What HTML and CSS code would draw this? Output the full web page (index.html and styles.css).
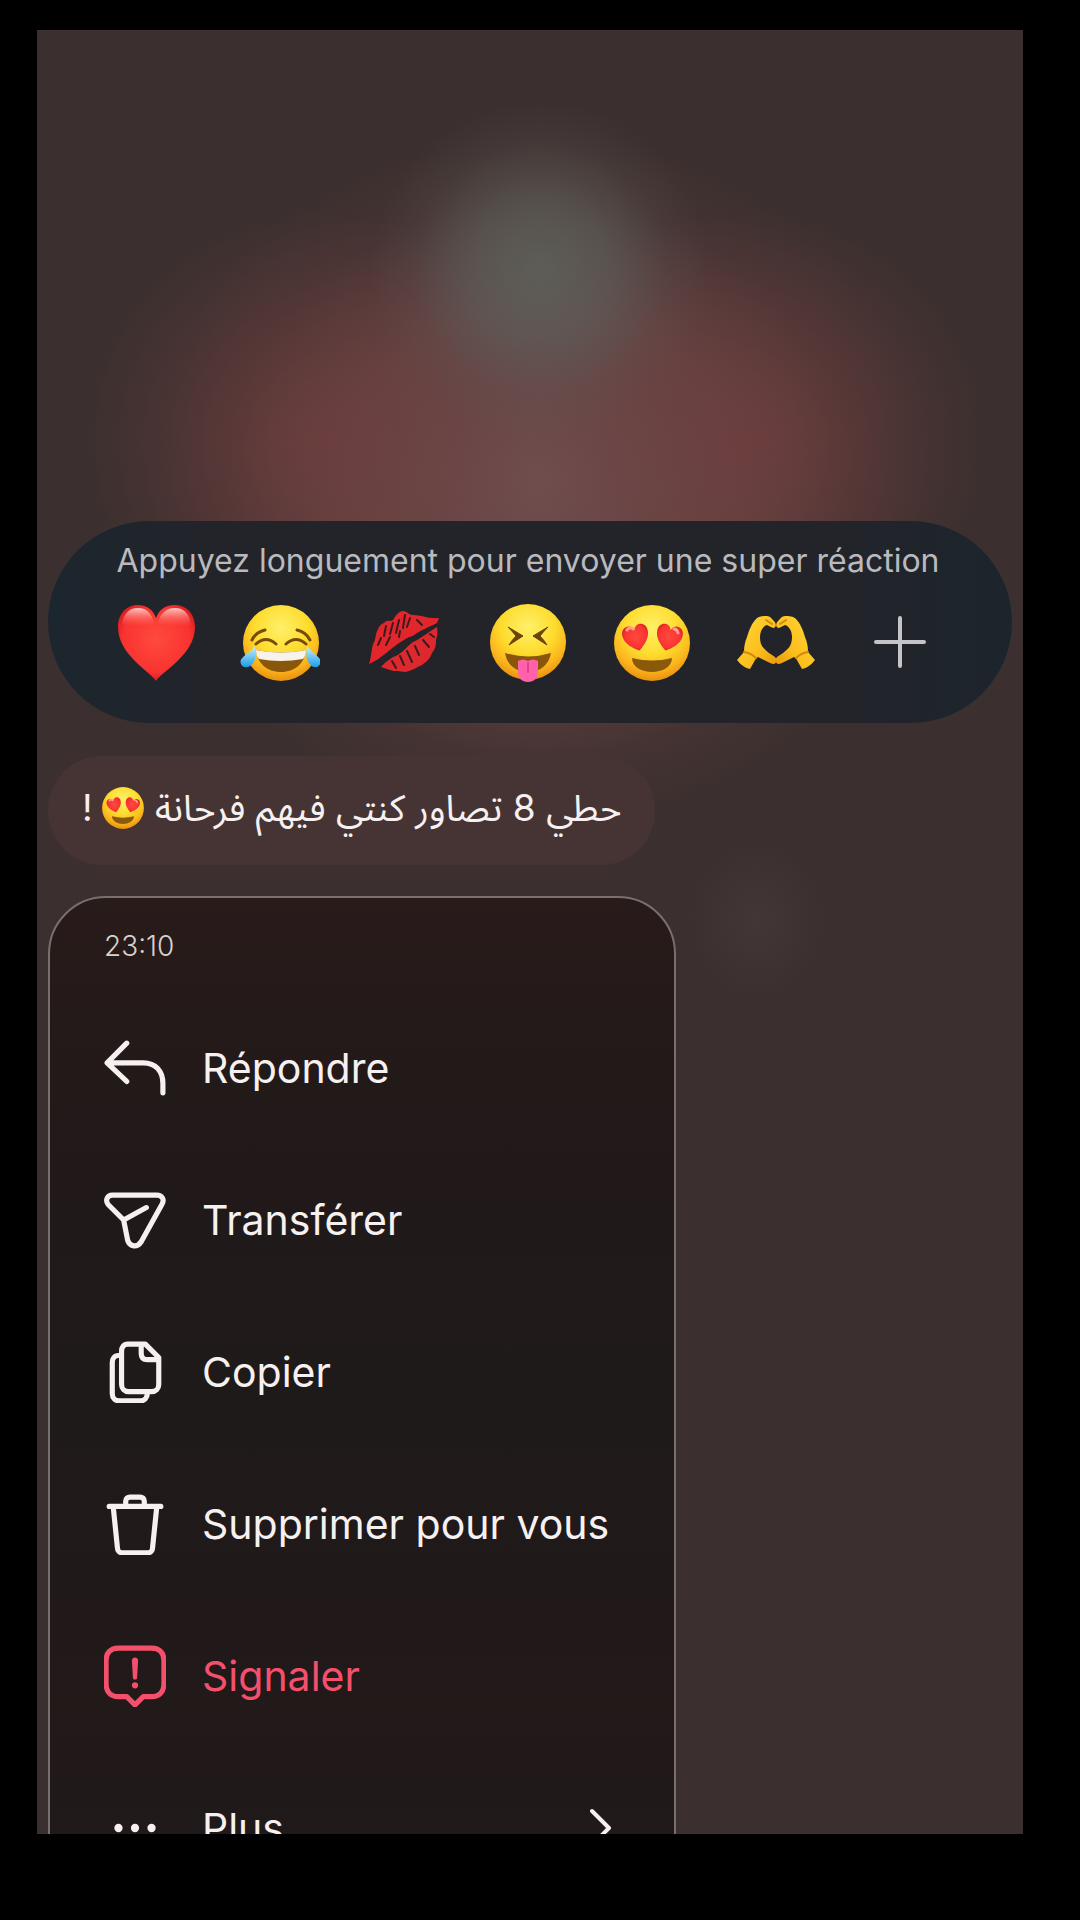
FILE: index.html
```html
<!DOCTYPE html>
<html lang="fr">
<head>
    <meta charset="utf-8">
    <meta name="viewport" content="width=device-width, initial-scale=1">
    <title>Message</title>
    <link rel="stylesheet" href="styles.css">
</head>
<body>
    <!-- Shared emoji shapes -->
    <svg class="defs" width="0" height="0" aria-hidden="true">
        <defs>
            <radialGradient id="face" cx="50%" cy="30%" r="70%">
                <stop offset="0" stop-color="#fff06a"/>
                <stop offset="0.5" stop-color="#fddc2e"/>
                <stop offset="0.8" stop-color="#fbb41c"/>
                <stop offset="1" stop-color="#e8900f"/>
            </radialGradient>
            <radialGradient id="red" cx="50%" cy="45%" r="62%">
                <stop offset="0" stop-color="#ff4a3e"/>
                <stop offset="0.7" stop-color="#f93330"/>
                <stop offset="1" stop-color="#c8141c"/>
            </radialGradient>
            <linearGradient id="shine" x1="0" y1="0" x2="0" y2="1">
                <stop offset="0" stop-color="#ffd9d6" stop-opacity="0.9"/>
                <stop offset="1" stop-color="#ff6a60" stop-opacity="0"/>
            </linearGradient>
            <linearGradient id="tear" x1="0" y1="0" x2="0" y2="1">
                <stop offset="0" stop-color="#c8f2fb"/>
                <stop offset="1" stop-color="#1c9be8"/>
            </linearGradient>
            <linearGradient id="hand" x1="0" y1="0" x2="1" y2="1">
                <stop offset="0" stop-color="#ffd83a"/>
                <stop offset="0.6" stop-color="#fcbf1d"/>
                <stop offset="1" stop-color="#e5950f"/>
            </linearGradient>
            <path id="eye-heart" d="M0 14C-6 10-13 4-13-4c0-5 3-8 7-8 3 0 5 2 6 5 1-3 3-5 6-5 4 0 7 3 7 8 0 8-7 14-13 18z"/>
            <path id="half-hands" d="M1 57L8 49C8 43 9 39 11 34C13 27 16 20 20 16C23 13 27 13 31 13C34 13 36 16 38 18C41 21 40 25 37 25L31 22C27 23 24 28 24 34C24 43 28 46 33 50L39 54C41 56 41 60 38 61C35 61 33 59 30 58L22 54C20 55 19 57 18 59L14 66C9 65 5 62 1 57z"/>
            <symbol id="heart-eyes" viewBox="0 0 80 80">
                <circle cx="40" cy="40" r="38" fill="url(#face)"/>
                <use href="#eye-heart" transform="translate(24 34) rotate(-14)" fill="url(#red)"/>
                <use href="#eye-heart" transform="translate(57 34) rotate(14)" fill="url(#red)"/>
                <path d="M15 27q3-4 6-1M62 26q3 0 4 4" fill="none" stroke="#ff9d94" stroke-width="3" stroke-linecap="round"/>
                <path d="M20 55q20 5 40 0c0 9-10 14-20 14s-20-5-20-14z" fill="#8a5a0a"/>
            </symbol>
        </defs>
    </svg>

    <main class="screen">
        <section class="reactions" aria-label="Réactions">
            <p class="hint">Appuyez longuement pour envoyer une super réaction</p>
            <div class="emoji-row">
                <button type="button" aria-label="Cœur">
                    <svg viewBox="0 0 80 80">
                        <path d="M40 78C34 68 2 52 2 24 2 10 11 2 22 2c9 0 15 5 18 13C43 7 49 2 58 2c12 0 21 8 21 22 0 28-33 44-39 54z" fill="url(#red)"/>
                        <path d="M6 22C7 11 13 5 22 5s14 6 16 15c-9 4-22 3-32 2zM42 20C44 11 50 5 59 5s15 6 16 17c-11 2-24 2-33-2z" fill="url(#shine)"/>
                    </svg>
                </button>
                <button type="button" aria-label="Larmes de joie">
                    <svg viewBox="0 0 80 80">
                        <circle cx="41" cy="40" r="38" fill="url(#face)"/>
                        <path d="M12 37q4-8 13-10M70 37q-4-8-13-10" fill="none" stroke="#7a4a08" stroke-width="3" stroke-linecap="round"/>
                        <path d="M16 41q10-9 20 0M46 41q10-9 20 0" fill="none" stroke="#7a4a08" stroke-width="3" stroke-linecap="round"/>
                        <path d="M16 47q25 5 50 0c-1 13-11 22-25 22S17 60 16 47z" fill="#8a560a"/>
                        <path d="M16 47q25 5 50 0c0 4-1 7-3 9q-22 4-44 0c-2-2-3-5-3-9z" fill="#f7f3ec"/>
                        <path d="M15 43c1 8 1 13-2 17-3 5-10 6-12 1-3-7 8-9 14-18zM67 43c-1 8-1 13 2 17 3 5 9 6 11 1 3-7-7-9-13-18z" fill="url(#tear)"/>
                    </svg>
                </button>
                <button type="button" aria-label="Bisou">
                    <svg viewBox="0 0 80 80">
                        <path d="M5 61c3-8 2-18 6-24 1-8 4-16 9-17 3-4 6-1 9-3 3-5 6-9 10-9 4 0 6 4 10 4 8 0 16 4 26 3l-2 5c-8 4-13 6-20 10-7 5-12 7-17 12-10 2-18 14-31 19z" fill="#e2262b"/>
                        <path d="M17 64c4-5 8-7 12-10 8-2 13-10 20-15 9-4 15-10 24-15 1 6 0 9-1 13 0 7-1 9-4 13-2 6-6 9-10 12-5 2-10 6-17 7-5-1-10 0-15-2z" fill="#dd282d"/>
                        <path d="M22 23l-2 10M29 20l-3 11M35 17l-3 13M41 12l-2 13M46 15l-3 9M53 17l5 5M17 35l-3 7M26 34l-4 8M36 28l-1 6M28 58l4 7M36 53l4 9M43 48l5 11M51 43l4 9M59 37l6 7M66 31l4 3" fill="none" stroke="#3b1a20" stroke-width="2" stroke-linecap="round"/>
                        <path d="M27 46l8-6 10-6 6-1-8 8-11 4z" fill="#22242a"/>
                    </svg>
                </button>
                <button type="button" aria-label="Langue tirée">
                    <svg viewBox="0 0 80 80">
                        <circle cx="40" cy="39" r="38" fill="url(#face)"/>
                        <path d="M20 24l15 9-14 9q3-5 7-9-4-5-8-9zM60 24l-15 9 14 9q-3-5-7-9 4-5 8-9z" fill="#6c430a" stroke="#6c430a" stroke-linejoin="round"/>
                        <path d="M17 50q23 7 46 0c-2 12-11 19-23 19s-21-7-23-19z" fill="#8a560a"/>
                        <path d="M30 58q5-3 10 0 5-3 10 0v11c0 6-4 10-10 10s-10-4-10-10z" fill="#ff62ab"/>
                        <path d="M40 60v9" stroke="#e63f8d" stroke-width="2" stroke-linecap="round"/>
                    </svg>
                </button>
                <button type="button" aria-label="Yeux en cœur">
                    <svg><use href="#heart-eyes"/></svg>
                </button>
                <button type="button" aria-label="Mains en cœur">
                    <svg viewBox="0 0 80 80">
                        <use href="#half-hands" fill="url(#hand)"/>
                        <use href="#half-hands" transform="matrix(-1 0 0 1 80 0)" fill="url(#hand)"/>
                        <path d="M30 17l6 4M50 17l-6 4M8 49q7 1 12 6M72 49q-7 1-12 6" fill="none" stroke="#d08a10" stroke-width="2" stroke-linecap="round"/>
                    </svg>
                </button>
                <button type="button" aria-label="Ajouter">
                    <svg viewBox="0 0 80 80">
                        <path d="M16 39h48M40 15v48" fill="none" stroke="#c4c4c9" stroke-width="4" stroke-linecap="round"/>
                    </svg>
                </button>
            </div>
        </section>

        <p class="bubble" dir="rtl" lang="ar">حطي 8 تصاور كنتي فيهم فرحانة <svg role="img" aria-label="Yeux en cœur"><use href="#heart-eyes"/></svg>!</p>

        <section class="menu">
            <time class="time">23:10</time>
            <button type="button" class="item">
                <svg viewBox="0 0 60 60"><path d="M22 6L3 25l19 18M4 25h34c12 0 19 8 19 20v9"/></svg>
                <span>Répondre</span>
            </button>
            <button type="button" class="item">
                <svg viewBox="0 0 60 60"><path d="M8 6h43c5 0 8 4 5 9L36 51c-4 6-11 5-13-1l-4-20L4 15C1 11 3 6 8 6zM19 30l22-12"/></svg>
                <span>Transférer</span>
            </button>
            <button type="button" class="item">
                <svg viewBox="0 0 60 60"><path d="M23 3h17l13 13v26c0 4-3 7-7 7H24c-4 0-7-3-7-7V10c0-4 2-7 6-7zM36 3v9c0 4 2 6 6 6h11M17 14h-3c-4 0-6 3-6 7v30c0 4 3 7 7 7h20c4 0 7-3 7-8"/></svg>
                <span>Copier</span>
            </button>
            <button type="button" class="item">
                <svg viewBox="0 0 60 60"><path d="M5 13h50M9 14l4 39c0 3 2 5 5 5h24c3 0 5-2 5-5l4-39M21 12V8c0-3 2-4 4-4h10c2 0 4 1 4 4v4"/></svg>
                <span>Supprimer pour vous</span>
            </button>
            <button type="button" class="item danger">
                <svg viewBox="0 0 60 60"><path d="M14 3h32c8 0 12 5 12 12v22c0 8-4 13-12 13h-8l-8 8-8-8h-8C6 50 2 45 2 37V15C2 8 6 3 14 3z"/><path class="solid" d="M27 15c0-4 6-4 6 0l-1 17c0 2-4 2-4 0z"/><circle class="solid" cx="30" cy="39" r="3"/></svg>
                <span>Signaler</span>
            </button>
            <button type="button" class="item">
                <svg viewBox="0 0 60 60"><g class="solid"><circle cx="14" cy="30" r="4"/><circle cx="30" cy="30" r="4"/><circle cx="46" cy="30" r="4"/></g></svg>
                <span>Plus</span>
                <svg class="chevron" viewBox="0 0 22 40"><path d="M2 3l17 17L2 37"/></svg>
            </button>
        </section>
    </main>
</body>
</html>
```

FILE: styles.css
```css
* {
    box-sizing: border-box;
}

body {
    margin: 0;
    padding: 30px 57px 86px 37px;
    height: 100vh;
    background-color: #000;
    font-family: Inter, Roboto, sans-serif;
    color: #f6f1f0;
}

button {
    border: 0;
    padding: 0;
    background: none;
    color: inherit;
    font: inherit;
    cursor: pointer;
}

.defs {
    position: absolute;
}

.screen {
    height: 100%;
    overflow: hidden;
    padding: 491px 11px 0;
    display: flex;
    flex-direction: column;
    align-items: flex-start;
    background:
        radial-gradient(170px 170px at 51% 240px, rgba(94, 97, 91, 0.9) 0%, rgba(94, 95, 90, 0.65) 40%, rgba(92, 88, 84, 0.2) 75%, rgba(92, 86, 82, 0) 100%),
        radial-gradient(230px 230px at 28% 410px, rgba(114, 62, 62, 0.7) 0%, rgba(114, 62, 62, 0) 100%),
        radial-gradient(230px 230px at 73% 410px, rgba(114, 62, 62, 0.7) 0%, rgba(114, 62, 62, 0) 100%),
        radial-gradient(390px 350px at 51% 450px, rgba(112, 78, 78, 1) 0%, rgba(110, 72, 72, 0.75) 50%, rgba(96, 60, 60, 0.25) 80%, rgba(80, 54, 54, 0) 100%),
        radial-gradient(70px 80px at 73% 890px, rgba(70, 60, 58, 0.6), rgba(60, 48, 47, 0)),
        #3b302f;
}

/* Reaction bar */
.reactions {
    width: 100%;
    padding: 20px 50px 40px 46px;
    border-radius: 101px;
    background: linear-gradient(90deg, #1c262e, #22242a 16%, #22242a 84%, #1c252c);
}

.hint {
    margin: 0 0 22px;
    font-size: 32px;
    line-height: 40px;
    text-align: center;
    white-space: nowrap;
    color: #b9babe;
}

.emoji-row {
    display: grid;
    grid-template-columns: repeat(7, 1fr);
    justify-items: center;
}

.emoji-row button,
.emoji-row svg {
    display: block;
    width: 80px;
    height: 80px;
}

/* Message */
.bubble {
    margin: 33px 0 31px;
    padding: 25px 34px 30px;
    border-radius: 54px;
    background-color: #463434;
    font-family: Inter, "Noto Sans Arabic", "DejaVu Sans", sans-serif;
    font-size: 37px;
    line-height: 54px;
    white-space: nowrap;
}

.bubble svg {
    width: 44px;
    height: 44px;
    margin-left: 8px;
    vertical-align: -9px;
}

/* Context menu */
.menu {
    width: 628px;
    border: 2px solid #79706e;
    border-radius: 58px;
    background: linear-gradient(#281b1a, #221919 20%, #1f1a1a 50%, #221919 80%, #1f1a1a);
    flex-shrink: 0;
}

.time {
    display: block;
    padding: 30px 54px 0;
    font-size: 28px;
    font-weight: 300;
    line-height: 36px;
    color: #d8d2d1;
}

.item {
    display: flex;
    align-items: center;
    width: 100%;
    height: 152px;
    padding: 0 62px 0 54px;
    gap: 36px;
    font-size: 41px;
    line-height: 52px;
    text-align: left;
    white-space: nowrap;
}

.time + .item {
    margin-top: 28px;
}

.item svg {
    width: 62px;
    height: 62px;
    flex-shrink: 0;
    fill: none;
    stroke: currentColor;
    stroke-width: 5;
    stroke-linecap: round;
    stroke-linejoin: round;
}

.item .solid {
    fill: currentColor;
    stroke: none;
}

.item .chevron {
    width: 22px;
    height: 40px;
    margin-left: auto;
    stroke-width: 4;
}

.danger {
    color: #f4506c;
}
```
